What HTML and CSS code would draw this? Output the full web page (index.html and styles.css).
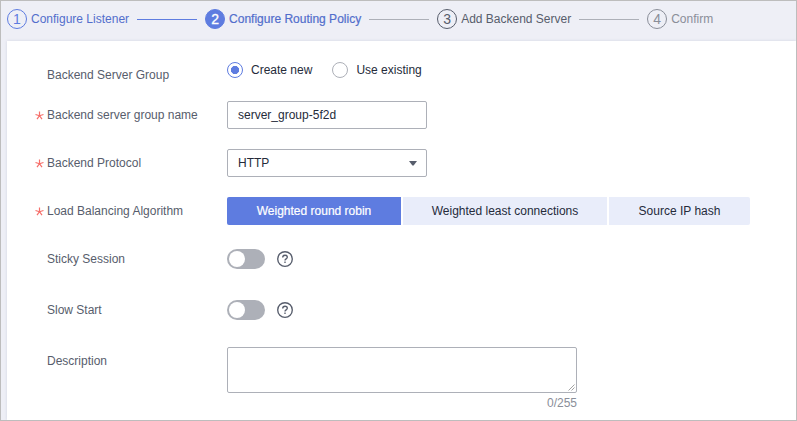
FILE: index.html
```html
<!DOCTYPE html>
<html lang="en">
<head>
<meta charset="utf-8">
<title>Configure Routing Policy</title>
<link rel="stylesheet" href="styles.css">
</head>
<body>
<div class="frame">
  <nav class="steps">
    <div class="step done"><span class="num">1</span><span class="step-label">Configure Listener</span></div>
    <i class="line line-done"></i>
    <div class="step current"><span class="num">2</span><span class="step-label">Configure Routing Policy</span></div>
    <i class="line"></i>
    <div class="step next"><span class="num">3</span><span class="step-label">Add Backend Server</span></div>
    <i class="line"></i>
    <div class="step later"><span class="num">4</span><span class="step-label">Confirm</span></div>
  </nav>
  <main class="card">
    <div class="row row-group">
      <div class="label">Backend Server Group</div>
      <div class="radios">
        <div class="radio on"><span class="dot"></span>Create new</div>
        <div class="radio"><span class="dot"></span>Use existing</div>
      </div>
    </div>
    <div class="row">
      <div class="label"><svg class="star" viewBox="0 0 9 9"><path d="M4.5 .4v4.3M.5 3.5l4 1.2 4-1.2M2 8.2l2.5-3.5L7 8.2"/></svg>Backend server group name</div>
      <div class="field">server_group-5f2d</div>
    </div>
    <div class="row">
      <div class="label"><svg class="star" viewBox="0 0 9 9"><path d="M4.5 .4v4.3M.5 3.5l4 1.2 4-1.2M2 8.2l2.5-3.5L7 8.2"/></svg>Backend Protocol</div>
      <div class="field select">HTTP<svg class="caret" viewBox="0 0 8 5"><path d="M0 0h8L4.6 4.6h-1.2z"/></svg></div>
    </div>
    <div class="row">
      <div class="label"><svg class="star" viewBox="0 0 9 9"><path d="M4.5 .4v4.3M.5 3.5l4 1.2 4-1.2M2 8.2l2.5-3.5L7 8.2"/></svg>Load Balancing Algorithm</div>
      <div class="segments">
        <div class="segment active">Weighted round robin</div>
        <div class="segment">Weighted least connections</div>
        <div class="segment">Source IP hash</div>
      </div>
    </div>
    <div class="row row-switch">
      <div class="label">Sticky Session</div>
      <div class="switch-area"><span class="switch"></span><svg class="help" viewBox="0 0 16 16"><circle cx="8" cy="8" r="7.3"/><path d="M5.7 6.5C5.7 5 6.7 4.2 8 4.2s2.3.8 2.3 2c0 1.6-2.3 1.7-2.3 3.3"/><path d="M8 10.6v1.5"/></svg></div>
    </div>
    <div class="row row-switch">
      <div class="label">Slow Start</div>
      <div class="switch-area"><span class="switch"></span><svg class="help" viewBox="0 0 16 16"><circle cx="8" cy="8" r="7.3"/><path d="M5.7 6.5C5.7 5 6.7 4.2 8 4.2s2.3.8 2.3 2c0 1.6-2.3 1.7-2.3 3.3"/><path d="M8 10.6v1.5"/></svg></div>
    </div>
    <div class="row row-description">
      <div class="label">Description</div>
      <div class="description">
        <div class="textarea"><svg class="grip" viewBox="0 0 7 7"><path d="M.5 6.5l6-6M3.5 6.5l3-3"/></svg></div>
        <div class="counter">0/255</div>
      </div>
    </div>
  </main>
</div>
</body>
</html>
```
FILE: styles.css
```css
* { box-sizing: border-box; }
body {
  margin: 0;
  font: 12px/16px "Liberation Sans", Arial, sans-serif;
  color: #252b3a;
}
.frame {
  width: 797px;
  height: 421px;
  border: 1px solid #bdbdbd;
  background: #eeeff6;
  overflow: hidden;
  display: flex;
  flex-direction: column;
}
.steps {
  height: 40px;
  flex: none;
  display: flex;
  align-items: flex-start;
  padding: 8px 0 0 6px;
  white-space: nowrap;
}
.step { display: flex; align-items: center; gap: 4px; height: 20px; }
.step-label { line-height: 20px; }
.num {
  width: 20px;
  height: 20px;
  border: 1px solid;
  border-radius: 50%;
  font-size: 14px;
  line-height: 19px;
  text-align: center;
}
.done { color: #526ecc; }
.done .num { color: #5e7ce0; }
.current { color: #526ecc; }
.current .step-label { -webkit-text-stroke: .2px; }
.current .num { background: #5e7ce0; border-color: #5e7ce0; color: #fff; -webkit-text-stroke: .3px; }
.next { color: #575d6c; }
.later { color: #8a8e99; }
.line { width: 60px; height: 1px; margin: 10px 8px 0; background: #adb0b8; }
.line-done { background: #5e7ce0; }

.card {
  flex: 1;
  margin-left: 6px;
  padding: 20px 0 0 28px;
  background: #fff;
  box-shadow: 0 0 3px rgba(40, 50, 90, .13);
}
.row {
  display: grid;
  grid-template-columns: 192px 1fr;
  height: 28px;
  margin-bottom: 20px;
}
.row-group { margin-bottom: 12px; }
.row-switch { margin-bottom: 23px; }
.label {
  position: relative;
  padding-left: 12px;
  line-height: 28px;
  color: #575d6c;
}
.star {
  position: absolute;
  left: -.5px;
  top: 10px;
  width: 9px;
  height: 9px;
  fill: none;
  stroke: #f66f6a;
  stroke-width: 1.2;
}
.radios { display: flex; gap: 20px; height: 18px; align-items: center; }
.radio { display: flex; align-items: center; gap: 8px; }
.dot { width: 16px; height: 16px; border: 1px solid #adb0b8; border-radius: 50%; }
.on .dot { border-color: #5e7ce0; background: radial-gradient(circle, #5e7ce0 3.8px, #fff 4.4px); }
.field {
  width: 200px;
  height: 28px;
  border: 1px solid #adb0b8;
  border-radius: 2px;
  padding: 0 9px 0 10px;
  line-height: 26px;
}
.select { display: flex; align-items: center; justify-content: space-between; }
.caret { width: 8px; height: 5px; margin-top: 1px; fill: #575d6c; }
.select { padding-right: 9px; }
.segments { display: flex; gap: 2px; }
.segment { height: 28px; line-height: 28px; width: 141px; background: #e9edfa; text-align: center; }
.segment:first-child { width: 174px; border-radius: 2px 0 0 2px; }
.segment:nth-child(2) { width: 204px; }
.segment:last-child { border-radius: 0 2px 2px 0; }
.segment.active { background: #5e7ce0; color: #fff; -webkit-text-stroke: .2px; }
.switch-area { display: flex; align-items: center; gap: 12px; }
.switch { width: 38px; height: 20px; border-radius: 10px; background: #adb0b8; padding: 2px; }
.switch::before { content: ""; display: block; width: 16px; height: 16px; border-radius: 50%; background: #fff; }
.help { width: 16px; height: 16px; fill: none; stroke: #575d6c; stroke-width: 1.35; }
.row-description { height: 64px; margin-bottom: 0; }
.description { width: 350px; }
.textarea {
  height: 46px;
  border: 1px solid #adb0b8;
  border-radius: 2px;
  display: flex;
  justify-content: flex-end;
  align-items: flex-end;
  padding: 1px;
}
.grip { width: 7px; height: 7px; fill: none; stroke: #999; stroke-width: .9; }
.counter { margin-top: 2px; text-align: right; color: #8a8e99; }
```
